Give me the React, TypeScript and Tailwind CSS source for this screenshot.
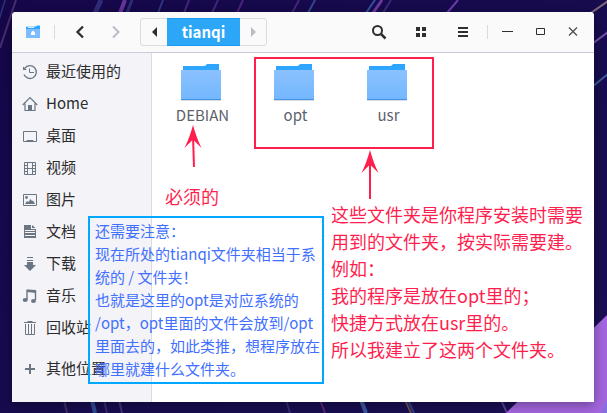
import type { ReactNode } from "react";

const slate = "#6b7684";

function Wallpaper() {
  const streaks: [number, number, number, number, string, number, number][] = [
    [5, 0, -1, 20, "#3d5fb0", 1.5, 0.5],
    [16, 0, 0, 48, "#7a5590", 2, 0.5],
    [101, 0, 95, 13, "#4a4ea8", 5, 0.5],
    [125, 0, 120, 13, "#7a3fae", 4, 0.8],
    [132, 0, 127, 13, "#43519c", 3, 0.5],
    [163, 0, 158, 13, "#3f56a6", 2, 0.6],
    [189, 0, 184, 13, "#6a3aa0", 2, 0.6],
    [218, 0, 212, 13, "#5a3ba0", 2, 0.6],
    [243, 0, 237, 13, "#7233a0", 2, 0.6],
    [299, 0, 292, 13, "#5f3b9c", 2, 0.6],
    [315, 0, 308, 13, "#3f62b4", 2, 0.7],
    [375, 0, 366, 13, "#3d70c0", 2, 0.7],
    [382, 0, 373, 13, "#7e48b8", 3, 0.8],
    [391, 0, 383, 13, "#513d98", 2, 0.6],
    [458, 0, 447, 13, "#7c4bc0", 2, 0.8],
    [608, 1, 588, 15, "#8c7480", 2, 0.9],
    [608, 32, 592, 44, "#7c5ab0", 2, 0.9],
    [608, 74, 592, 87, "#41639f", 2, 0.9],
    [64, 400, 67, 413, "#6d4f80", 2, 0.5],
    [92, 400, 95, 413, "#3f72c4", 4, 0.6],
    [104, 400, 107, 413, "#5a4494", 2, 0.5],
    [119, 400, 122, 413, "#5f4a9c", 2, 0.6],
    [286, 400, 290, 413, "#5a429c", 2, 0.5],
    [320, 400, 325, 413, "#80379a", 2, 0.6],
    [361, 400, 366, 413, "#4a78c0", 4, 0.7],
    [405, 400, 411, 413, "#8f6a54", 2, 0.7],
    [408, 400, 414, 413, "#3d62b8", 2, 0.6],
    [501, 400, 507, 413, "#7650b0", 2, 0.7],
  ];
  return (
    <svg className="absolute inset-0 h-full w-full" viewBox="0 0 607 413" preserveAspectRatio="none" aria-hidden="true">
      <defs>
        <linearGradient id="night" x1="0" y1="0" x2="1" y2="1">
          <stop offset="0" stopColor="#15074a" />
          <stop offset="1" stopColor="#1a1054" />
        </linearGradient>
      </defs>
      <rect width="607" height="413" fill="url(#night)" />
      {streaks.map(([x1, y1, x2, y2, color, width, opacity], i) => (
        <line key={i} x1={x1} y1={y1} x2={x2} y2={y2} stroke={color} strokeWidth={width} opacity={opacity} />
      ))}
      <path d="M607 315L506 413H607Z" fill="#a366de" />
      <path d="M607 400L601 413H607Z" fill="#8670e0" />
    </svg>
  );
}

function Folder() {
  return (
    <svg width="43" height="40" viewBox="0 0 43 40" aria-hidden="true">
      <defs>
        <linearGradient id="folder" x1="0" y1="0" x2="0" y2="1">
          <stop offset="0" stopColor="#8bc1ff" />
          <stop offset="1" stopColor="#73b7ff" />
        </linearGradient>
      </defs>
      <path d="M2 3H23Q25 3 26 1H38V10H2Z" fill="#2ea5ff" />
      <rect x="0" y="37" width="40" height="1" fill="#d9dde3" />
      <rect x="0" y="7" width="40" height="30" fill="url(#folder)" />
      <rect x="0" y="36" width="40" height="1" fill="#4394e4" />
    </svg>
  );
}

function PlaceIcon({ children }: { children: ReactNode }) {
  return (
    <svg className="shrink-0" width="16" height="16" viewBox="0 0 16 16" fill="none" stroke={slate} aria-hidden="true">
      {children}
    </svg>
  );
}

const places: { label: string; icon: ReactNode }[] = [
  {
    label: "最近使用的",
    icon: (
      <>
        <path d="M2.8 4.2A6.4 6.4 0 1 1 2 10.5" strokeWidth="1.3" />
        <path d="M1 2.5V6H5Z" fill={slate} stroke="none" />
        <path d="M7.5 4.5V8.5H12" />
      </>
    ),
  },
  {
    label: "Home",
    icon: (
      <>
        <path d="M.7 9L8 1.7L15.3 9M3 7.5V14.5H13V7.5" strokeWidth="1.2" />
        <path d="M6 9H10V15H6Z" fill={slate} stroke="none" />
      </>
    ),
  },
  {
    label: "桌面",
    icon: (
      <>
        <path d="M1.5 3.5H14.5V13.5H1.5Z" />
        <path d="M4 13.5L5 12H11L12 13.5Z" fill={slate} stroke="none" />
      </>
    ),
  },
  {
    label: "视频",
    icon: <path d="M2.5 2.5H13.5V14.5H2.5ZM5.5 2.5V14.5M10.5 2.5V14.5M2.5 5.5H5.5M2.5 8.5H13.5M2.5 11.5H5.5M10.5 5.5H13.5M10.5 11.5H13.5" />,
  },
  {
    label: "图片",
    icon: (
      <>
        <path d="M1.5 2.5H14.5V13.5H1.5Z" />
        <path d="M3 12L5 9L6.5 10L8.5 7L10 9L11 8.5L13 12Z" fill={slate} stroke="none" />
        <circle cx="4.5" cy="5.5" r="1.4" fill={slate} stroke="none" />
      </>
    ),
  },
  {
    label: "文档",
    icon: (
      <>
        <path d="M2 1H9V5H14V14H2Z" fill={slate} stroke="none" />
        <path d="M10 1L13.5 4H10Z" fill={slate} stroke="none" />
        <path d="M3 6.5H13M3 8.5H13M3 11.5H13" stroke="#f4f3f7" />
      </>
    ),
  },
  {
    label: "下载",
    icon: <path d="M5 1H11V2H5ZM5 4H11V5H5ZM5 6H11V9H14L8 15L2 9H5Z" fill={slate} stroke="none" />,
  },
  {
    label: "音乐",
    icon: (
      <>
        <path d="M5 12V2.5L13.5 3V12" strokeWidth="1.4" />
        <path d="M5 1.5L14 2V5L5 4Z" fill={slate} stroke="none" />
        <ellipse cx="3.2" cy="12" rx="2.5" ry="2" fill={slate} stroke="none" />
        <ellipse cx="11.5" cy="13" rx="2.5" ry="2" fill={slate} stroke="none" />
      </>
    ),
  },
  {
    label: "回收站",
    icon: <path d="M2 2.5H14M5.5 1.5H10.5M3.5 4V14.5H12.5V4M6.5 4V14M9.5 4V14" />,
  },
];

function Place({ label, icon }: { label: string; icon: ReactNode }) {
  return (
    <li>
      <button type="button" className="flex h-8 w-full items-center gap-2 pl-[10px] text-left whitespace-nowrap">
        <PlaceIcon>{icon}</PlaceIcon>
        <span className="pb-[2px]">{label}</span>
      </button>
    </li>
  );
}

function IconButton({ label, className, children }: { label: string; className: string; children: ReactNode }) {
  return (
    <button type="button" aria-label={label} className={`flex h-8 shrink-0 items-center justify-center ${className}`}>
      <svg width="16" height="16" viewBox="0 0 16 16" fill="none" stroke="#2f2f30" aria-hidden="true">
        {children}
      </svg>
    </button>
  );
}

function HeaderBar() {
  return (
    <header className="flex h-[41px] items-center rounded-t-[4px] border-b border-[#cccad8] bg-[#fafafa] pr-[5px]">
      <IconButton label="文件" className="w-[42px]">
        <path d="M1 3L3 2.5H11L12 1.5H15V6H1Z" fill="#2ea5ff" stroke="none" />
        <path d="M3 2.5H9V4H3Z" fill="#d5ebff" stroke="none" />
        <path d="M1 5H15V14H1Z" fill="#7dbcff" stroke="none" />
        <path d="M8 6.5L10 8.5V11H6V8.5Z" fill="#ffffff" stroke="none" />
      </IconButton>
      <span className="h-[14px] w-px bg-[#d9d9de]" />
      <div className="flex pr-[6px] pl-[7px]">
        <IconButton label="后退" className="w-9">
          <path d="M11 2.5L5.5 8L11 13.5" strokeWidth="2.3" />
        </IconButton>
        <IconButton label="前进" className="w-9">
          <path d="M5 2.5L10.5 8L5 13.5" stroke="#babdc5" strokeWidth="2" />
        </IconButton>
      </div>
      <nav className="flex h-7 shrink-0 rounded-[3px] border border-[#dcdce0]" aria-label="路径">
        <button type="button" aria-label="上一级" className="flex w-[26px] items-center justify-center">
          <svg width="5" height="10" viewBox="0 0 5 10" aria-hidden="true">
            <path d="M5 0V10L0 5Z" fill="#2f2f30" />
          </svg>
        </button>
        <button type="button" className="-my-px w-[73px] border-y border-[#1c97f0] bg-[#2ca7f8] text-[15px] leading-5 font-bold text-white">
          tianqi
        </button>
        <button type="button" aria-label="下一级" className="flex w-[26px] items-center justify-center">
          <svg width="5" height="10" viewBox="0 0 5 10" aria-hidden="true">
            <path d="M0 0V10L5 5Z" fill="#babdc5" />
          </svg>
        </button>
      </nav>
      <div className="ml-auto flex items-center">
        <IconButton label="搜索" className="w-[42px]">
          <circle cx="6.5" cy="6.5" r="4.5" strokeWidth="2" />
          <path d="M10 10L14.500 14.500" strokeWidth="2.5" />
        </IconButton>
        <IconButton label="图标视图" className="w-[42px]">
          <path d="M3 3H7V7H3ZM9 3H13V7H9ZM3 9H7V13H3ZM9 9H13V13H9Z" fill="#2f2f30" stroke="none" />
        </IconButton>
        <IconButton label="菜单" className="w-[42px]">
          <path d="M3 4H13M3 8H13M3 12H13" strokeWidth="2" />
        </IconButton>
        <span className="mr-[2px] ml-[3px] h-[14px] w-px bg-[#d9d9de]" />
        <IconButton label="最小化" className="w-[33px]">
          <path d="M3 7.5H14" />
        </IconButton>
        <IconButton label="最大化" className="w-[33px]">
          <path d="M4.5 4.5H12.5V10.5H4.5Z" />
        </IconButton>
        <IconButton label="关闭" className="w-[33px]">
          <path d="M4 3.5L12 11.5M12 3.5L4 11.5" stroke="#4a4a4b" strokeWidth="1.2" />
        </IconButton>
      </div>
    </header>
  );
}

function Arrow({ className, length, tilt }: { className: string; length: number; tilt: number }) {
  return (
    <svg className={`absolute ${className}`} width="18" height={length} viewBox={`0 0 18 ${length}`} aria-hidden="true">
      <path d={`M9 10L${9 + tilt} ${length}`} stroke="#ff1f4f" strokeWidth="2" />
      <path d="M9 0Q12.500 13 17.500 23L9 14.500L.5 23Q5.500 13 9 0Z" fill="#ff1f4f" />
    </svg>
  );
}

export default function App() {
  return (
    <main
      className="relative flex min-h-screen flex-col overflow-hidden pt-3 pr-[13px] pb-[11px] pl-3"
      style={{ fontFamily: '"Noto Sans CJK SC", sans-serif' }}
    >
      <Wallpaper />
      <section className="relative flex flex-1 flex-col rounded-t-[4px] bg-white shadow-[0_3px_12px_rgba(0,0,0,0.35)]">
        <HeaderBar />
        <div className="flex flex-1">
          <aside className="w-[140px] shrink-0 border-r border-[#dcdbe0] bg-[#f4f3f7] pt-[3px] text-[15px] leading-6 text-[#2c2c2e]">
            <ul>
              {places.map((p) => (
                <Place key={p.label} {...p} />
              ))}
            </ul>
            <ul className="pt-[9px]">
              <Place label="其他位置" icon={<path d="M8 3V13M3 8H13" strokeWidth="2" />} />
            </ul>
          </aside>
          <div className="flex flex-1 items-start pt-[10px] pl-1 text-[15px] leading-6 text-[#5c616c]">
            {["DEBIAN", "opt", "usr"].map((name) => (
              <button key={name} type="button" className="flex w-[93px] flex-col items-center">
                <Folder />
                {name}
              </button>
            ))}
          </div>
        </div>

        <div className="absolute top-[45px] left-[242px] h-[92px] w-[180px] border-2 border-[#ff1f4f]" />
        <Arrow className="top-[113px] left-[172px]" length={42} tilt={1} />
        <Arrow className="top-[138px] left-[349px]" length={49} tilt={0} />
        <p className="absolute top-[171px] left-[153px] text-[18px] leading-[27px] text-[#ff1f4f]">必须的</p>
        <p className="absolute top-[189px] left-[319px] text-[18px] leading-[27px] whitespace-nowrap text-[#ff1f4f]">
          这些文件夹是你程序安装时需要
          <br />
          用到的文件夹，按实际需要建。
          <br />
          例如：
          <br />
          我的程序是放在opt里的；
          <br />
          快捷方式放在usr里的。
          <br />
          所以我建立了这两个文件夹。
        </p>
        <p className="absolute top-[204px] left-[76px] w-[236px] border-2 border-[#00a8ff] px-[5px] pt-px pb-[2px] text-[15px] leading-[23px] whitespace-nowrap text-[#3f70ff]">
          还需要注意：
          <br />
          现在所处的tianqi文件夹相当于系
          <br />
          统的 / 文件夹！
          <br />
          也就是这里的opt是对应系统的
          <br />
          /opt，opt里面的文件会放到/opt
          <br />
          里面去的，如此类推，想程序放在
          <br />
          哪里就建什么文件夹。
        </p>
      </section>
    </main>
  );
}
